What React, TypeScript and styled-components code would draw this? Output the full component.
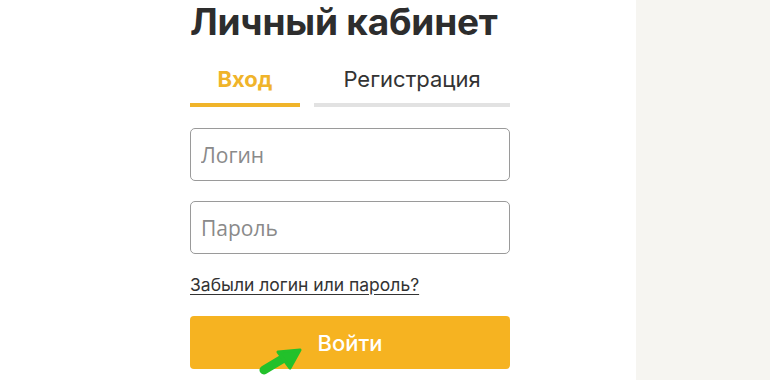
import React from 'react';
import styled, { createGlobalStyle } from 'styled-components';

const GlobalStyle = createGlobalStyle`
  html, body {
    margin: 0;
    padding: 0;
    background: #ffffff;
    font-family: Inter, "Noto Sans", sans-serif;
    color: #333333;
  }
  * { box-sizing: border-box; }
`;

const Page = styled.div`
  display: flex;
  width: 770px;
  height: 380px;
  overflow: hidden;
`;

const Main = styled.div`
  width: 636px;
  background: #ffffff;
  padding-left: 190px;
`;

const Side = styled.div`
  flex: 1;
  background: #f6f5f1;
`;

const Form = styled.div`
  width: 320px;
  display: flex;
  flex-direction: column;
`;

const Title = styled.h1`
  margin: 0;
  font-size: 37px;
  line-height: 44px;
  font-weight: 700;
  color: #2d2d2d;
  letter-spacing: -0.2px;
`;

const Tabs = styled.div`
  display: flex;
  gap: 14px;
  margin-top: 17px;
`;

const Tab = styled.div<{ $active?: boolean; $width: number }>`
  width: ${(p) => p.$width}px;
  text-align: center;
  font-size: 22px;
  line-height: 30px;
  font-weight: ${(p) => (p.$active ? 700 : 400)};
  color: ${(p) => (p.$active ? '#f0b42a' : '#333333')};
  padding-top: 3px;
  padding-bottom: 9px;
  border-bottom: 4px solid ${(p) => (p.$active ? '#f0b42a' : '#e2e2e2')};
`;

const Input = styled.input`
  width: 320px;
  height: 53px;
  border: 1.5px solid #9a9a9a;
  border-radius: 5px;
  padding: 0 10px;
  font-family: "Open Sans", "Noto Sans", sans-serif;
  font-size: 21px;
  color: #333;
  outline: none;
  &::placeholder {
    color: #8a8a8a;
  }
`;

const Fields = styled.div`
  display: flex;
  flex-direction: column;
  gap: 20px;
  margin-top: 21px;
`;

const Forgot = styled.a`
  margin-top: 19px;
  font-size: 17.5px;
  line-height: 24px;
  color: #333333;
  text-decoration: underline;
  text-underline-offset: 3px;
  align-self: flex-start;
`;

const ButtonWrap = styled.div`
  position: relative;
  margin-top: 19px;
`;

const Button = styled.button`
  width: 320px;
  height: 53px;
  border: none;
  border-radius: 4px;
  background: #f6b321;
  color: #ffffff;
  font-family: Inter, "Noto Sans", sans-serif;
  font-size: 22px;
  font-weight: 500;
`;

const Pointer = styled.svg`
  position: absolute;
  left: 66px;
  top: 30px;
`;

export default function App() {
  return (
    <>
      <GlobalStyle />
      <Page>
        <Main>
          <Form>
            <Title>Личный кабинет</Title>
            <Tabs>
              <Tab $active $width={110}>Вход</Tab>
              <Tab $width={196}>Регистрация</Tab>
            </Tabs>
            <Fields>
              <Input placeholder="Логин" />
              <Input placeholder="Пароль" type="password" />
            </Fields>
            <Forgot href="#">Забыли логин или пароль?</Forgot>
            <ButtonWrap>
              <Button>Войти</Button>
              <Pointer width="50" height="30" viewBox="0 0 50 30">
                <path d="M8 24 L28 12" stroke="#22c12b" strokeWidth="9" strokeLinecap="round" />
                <path d="M22 6 L44 4 L34 22 Z" fill="#22c12b" stroke="#22c12b" strokeWidth="3" strokeLinejoin="round" />
              </Pointer>
            </ButtonWrap>
          </Form>
        </Main>
        <Side />
      </Page>
    </>
  );
}
